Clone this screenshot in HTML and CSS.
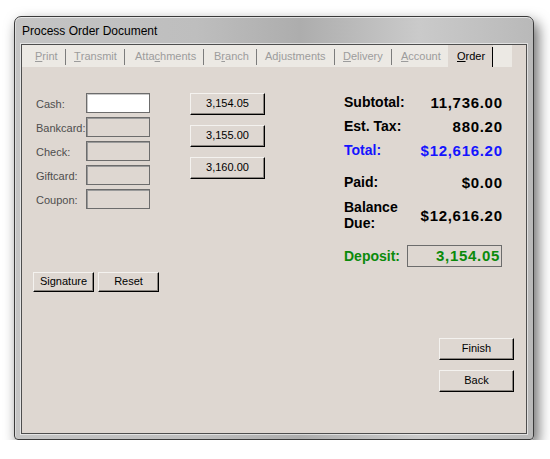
FILE: index.html
```html
<!DOCTYPE html>
<html>
<head>
<meta charset="utf-8">
<link rel="stylesheet" href="styles.css">
</head>
<body>
<div class="window">
  <div class="titlebar">Process Order Document</div>
  <div class="client">
    <div class="tabs">
      <span class="tab t1"><u>P</u>rint</span>
      <span class="tab t2"><u>T</u>ransmit</span>
      <span class="tab t3">Atta<u>c</u>hments</span>
      <span class="tab t4">B<u>r</u>anch</span>
      <span class="tab t5">Ad<u>j</u>ustments</span>
      <span class="tab t6"><u>D</u>elivery</span>
      <span class="tab t7"><u>A</u>ccount</span>
      <span class="tab t8 active"><u>O</u>rder</span>
    </div>
    <div class="content">
      <div class="top">
        <div class="form">
          <div class="field"><span class="lbl">Cash:</span><span class="input white"></span></div>
          <div class="field"><span class="lbl">Bankcard:</span><span class="input"></span></div>
          <div class="field"><span class="lbl">Check:</span><span class="input"></span></div>
          <div class="field"><span class="lbl">Giftcard:</span><span class="input"></span></div>
          <div class="field"><span class="lbl">Coupon:</span><span class="input"></span></div>
        </div>
        <div class="amounts">
          <button class="btn amt">3,154.05</button>
          <button class="btn amt">3,155.00</button>
          <button class="btn amt">3,160.00</button>
        </div>
        <div class="summary">
          <div class="row r1"><span class="k">Subtotal:</span><span class="v">11,736.00</span></div>
          <div class="row r2"><span class="k">Est. Tax:</span><span class="v">880.20</span></div>
          <div class="row r3 blue"><span class="k">Total:</span><span class="v">$12,616.20</span></div>
          <div class="row r4"><span class="k">Paid:</span><span class="v">$0.00</span></div>
          <div class="row r5"><span class="k two">Balance<br>Due:</span><span class="v">$12,616.20</span></div>
          <div class="row r6 green"><span class="k">Deposit:</span><span class="v box">3,154.05</span></div>
        </div>
      </div>
      <div class="sig-row">
        <button class="btn small">Signature</button>
        <button class="btn small">Reset</button>
      </div>
      <div class="nav">
        <button class="btn navbtn">Finish</button>
        <button class="btn navbtn">Back</button>
      </div>
    </div>
  </div>
</div>
</body>
</html>
```

FILE: styles.css
```css
* { box-sizing: border-box; }

body {
  margin: 0;
  background: #ffffff;
  font-family: "Liberation Sans", Arial, sans-serif;
  font-size: 11px;
}

.window {
  margin: 16px 0 0 14px;
  width: 520px;
  height: 424px;
  border: 1px solid #3a3a3a;
  border-radius: 7px 7px 4px 4px;
  background: linear-gradient(to right, #c4c4c4 0%, #bebebe 35%, #adadad 55%, #cacaca 78%, #b9b9b9 100%);
  box-shadow: 4px 6px 14px rgba(0, 0, 0, 0.6), inset 0 1px 0 rgba(255,255,255,0.6), inset 1px 0 0 rgba(255,255,255,0.4);
  display: flex;
  flex-direction: column;
}

.titlebar {
  height: 27px;
  padding: 6px 0 0 7px;
  font-size: 12px;
  line-height: 16px;
  color: #000;
}

.client {
  margin: 0 6px;
  width: 506px;
  height: 390px;
  border: 1px solid #4e4e4e;
  box-shadow: 0 0 0 1px rgba(255, 255, 255, 0.55);
  background: #ded7d1;
  display: flex;
  flex-direction: column;
}

.tabs {
  width: 490px;
  height: 22px;
  background: #ece9e4;
  display: flex;
  align-items: stretch;
}

.tab {
  display: flex;
  align-items: center;
  color: #9c9c9c;
  position: relative;
  line-height: 13px;
}
.tab::after {
  content: "";
  position: absolute;
  right: 0;
  top: 4px;
  bottom: 2px;
  width: 1px;
  background: #7c7c7c;
}
.tab u { text-decoration: underline; }
.t1 { width: 44px; padding-left: 13px; }
.t2 { width: 59px; padding-left: 8px; }
.t3 { width: 79px; padding-left: 10px; }
.t4 { width: 53px; padding-left: 10px; }
.t5 { width: 78px; padding-left: 8px; }
.t6 { width: 57px; padding-left: 8px; }
.t7 { width: 56px; padding-left: 9px; }
.t7::after { display: none; }
.t8 { width: 45px; padding-left: 9px; }
.tab.active {
  background: #ded7d1;
  color: #000;
}
.tab.active::after {
  top: 2px;
  bottom: 0;
  background: #000;
}

.content {
  flex: 1;
  display: flex;
  flex-direction: column;
}

.top {
  display: flex;
  margin-top: 26px;
}

.form {
  padding-left: 14px;
  display: flex;
  flex-direction: column;
  gap: 4px;
}
.field {
  display: flex;
  align-items: center;
  height: 20px;
}
.lbl {
  width: 50px;
  color: #4e4e4e;
  white-space: nowrap;
  padding-top: 1px;
}
.input {
  width: 64px;
  height: 20px;
  border: 1px solid #6c6c6c;
  box-shadow: inset 1px 1px 0 #9a9a9a;
}
.input.white {
  background: #fff;
  box-shadow: inset 1px 1px 0 #c8c8c8;
}

.btn {
  font-family: "Liberation Sans", Arial, sans-serif;
  font-size: 11px;
  color: #000;
  background: #ded7d1;
  border: 1px solid;
  border-color: #f4f2ef #000 #000 #f4f2ef;
  box-shadow: inset -1px -1px 0 #8a8580;
  padding: 0 0 2px 0;
  margin: 0;
  line-height: 13px;
  text-align: center;
}

.amounts {
  margin-left: 40px;
  display: flex;
  flex-direction: column;
  gap: 10px;
}
.amt { width: 75px; height: 22px; }

.summary {
  margin-left: auto;
  margin-right: 24px;
  width: 158px;
  display: flex;
  flex-direction: column;
  font-weight: bold;
  color: #000;
}
.row {
  display: flex;
  justify-content: space-between;
  align-items: center;
  height: 18px;
}
.k {
  font-size: 14px;
  line-height: 16px;
  white-space: nowrap;
}
.v {
  font-size: 15px;
  letter-spacing: 0.7px;
  margin-right: -0.7px;
  white-space: nowrap;
}
.r2, .r3 { margin-top: 6px; }
.r4 { margin-top: 14px; }
.r5 { margin-top: 8px; height: 32px; }
.r6 { margin-top: 14px; height: 22px; }
.blue { color: #1414ff; }
.green { color: #0b8a0b; }
.box {
  width: 95px;
  height: 22px;
  border: 1px solid #6c6c6c;
  text-align: right;
  padding-right: 1px;
  line-height: 20px;
  margin-right: 0;
}

.sig-row {
  margin-top: 5px;
  padding-left: 11px;
  display: flex;
  gap: 4px;
}
.small { width: 61px; height: 20px; }

.nav {
  margin-top: 46px;
  align-self: flex-end;
  margin-right: 12px;
  display: flex;
  flex-direction: column;
  gap: 10px;
}
.navbtn { width: 75px; height: 22px; }
```
